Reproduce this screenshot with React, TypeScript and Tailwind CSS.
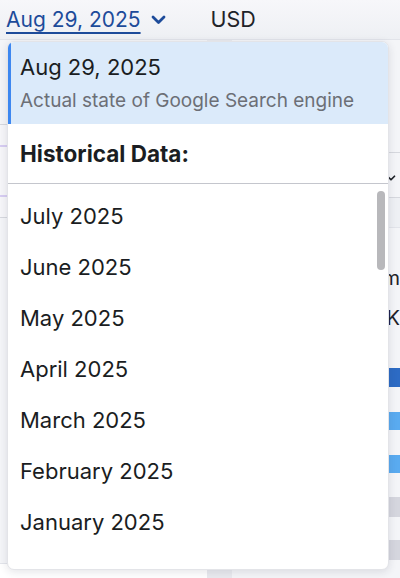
import { ChevronDown } from 'lucide-react';

const months = [
  'July 2025',
  'June 2025',
  'May 2025',
  'April 2025',
  'March 2025',
  'February 2025',
  'January 2025',
];

export default function App() {
  return (
    <div
      className="relative w-[400px] h-[578px] overflow-hidden bg-[#f4f5f8]"
      style={{ fontFamily: 'Inter, "Noto Sans", sans-serif' }}
    >
      {/* Top bar */}
      <div className="h-[40px] flex items-center bg-gradient-to-b from-[#f7f7fa] to-[#eef0f4] border-b border-[#e2e4ea]">
        <div className="flex items-center pl-[6px]">
          <span className="text-[21px] text-[#1d4b9a] underline underline-offset-[5px] decoration-[1.5px] decoration-[#1d4b9a] leading-none">
            Aug 29, 2025
          </span>
          <svg width="15" height="10" viewBox="0 0 15 10" className="ml-[10px] mt-[1px]">
            <path d="M2 2 L7.5 7.5 L13 2" fill="none" stroke="#1d4b9a" strokeWidth="2.8" strokeLinecap="round" strokeLinejoin="round" />
          </svg>
        </div>
        <span className="ml-[45px] text-[21.5px] text-[#1f2329] leading-none">USD</span>
      </div>

      {/* Page content behind the menu */}
      <div className="flex h-[538px]">
        <div className="w-[207px] flex flex-col bg-white">
          <div className="h-[84px] bg-[#f4f5f8]" />
          <div className="h-[94px] border-y border-[#d6d8de] bg-[#f6f6f9] flex flex-col justify-between py-[20px]">
            <div className="h-[2px] bg-[#d7cdf2]" />
            <div className="h-[2px] bg-[#d7cdf2]" />
          </div>
          <div className="flex-1 bg-[#f4f5f8] border-b border-[#e2e4ea]" />
          <div className="h-[14px] bg-white" />
        </div>
        <div className="w-[25px] bg-[#e9eaef]" />
        <div className="flex-1 bg-[#f4f5f8] flex flex-col text-[#1f2329]">
          <div className="h-[112px]" />
          <div className="h-[46px] border-y border-[#d6d8de] flex items-center justify-end pr-[2px] pt-[5px]">
            <ChevronDown className="w-[14px] h-[14px]" strokeWidth={3} />
          </div>
          <div className="h-[30px] border-b border-[#e2e4ea] bg-[#eef0f4]" />
          <div className="h-[30px]" />
          <div className="h-[40px] flex items-center justify-end text-[20px] leading-none">m</div>
          <div className="h-[40px] flex items-center justify-end text-[20px] leading-none">K</div>
          <div className="h-[30px]" />
          <div className="h-[19px] bg-[#2d6bc4]" />
          <div className="h-[25px]" />
          <div className="h-[18px] bg-[#5aabf0]" />
          <div className="h-[25px]" />
          <div className="h-[18px] bg-[#5aabf0]" />
          <div className="h-[24px]" />
          <div className="h-[20px] bg-[#d5d6de]" />
          <div className="h-[23px]" />
          <div className="h-[20px] bg-[#d5d6de]" />
        </div>
      </div>

      {/* Date dropdown */}
      <div className="absolute left-[7px] top-[41px] w-[382px] h-[529px] bg-white rounded-[7px] border border-[#e3e4e8] shadow-[0_2px_8px_rgba(30,35,60,0.12)] overflow-hidden flex flex-col">
        <div className="h-[82px] shrink-0 bg-[#dbeafa] border-l-[3px] border-[#3d87f0] pl-[9px] flex flex-col justify-center">
          <div className="text-[22px] text-[#1a1d22] leading-[28px]">Aug 29, 2025</div>
          <div className="mt-[8px] text-[19px] text-[#6c6f76] leading-[24px]">
            Actual state of Google Search engine
          </div>
        </div>
        <div className="h-[60px] shrink-0 border-b border-[#c4c6cd] pl-[12px] flex items-center">
          <span className="text-[22.5px] font-bold text-[#1a1d22]">Historical Data:</span>
        </div>
        <div className="relative flex-1 pt-[7px]">
          {months.map((m) => (
            <div key={m} className="h-[51px] pl-[12px] flex items-center text-[22px] text-[#1a1d22]">
              {m}
            </div>
          ))}
          <div className="absolute right-[3px] top-[7px] w-[8px] h-[79px] rounded-full bg-[#b8b8bb]" />
        </div>
      </div>
    </div>
  );
}
